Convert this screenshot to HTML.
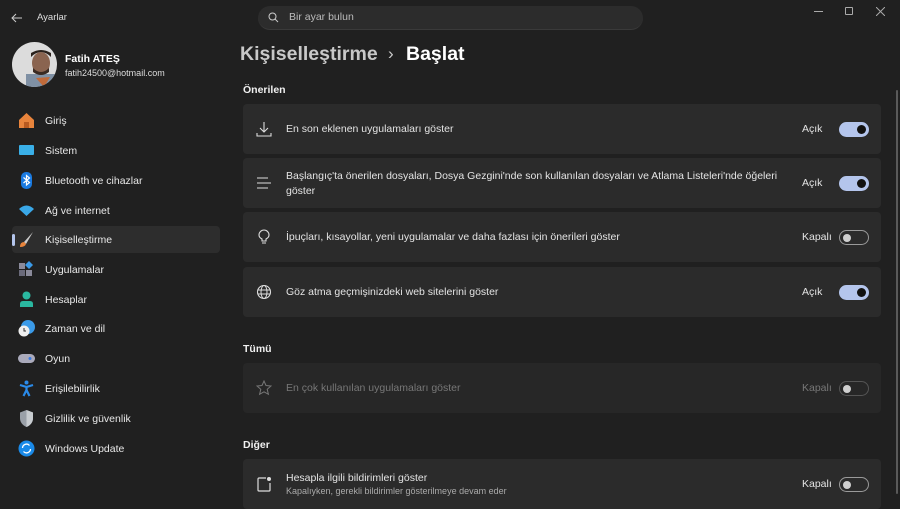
<!DOCTYPE html>
<html><head><meta charset="utf-8"><style>
*{margin:0;padding:0;box-sizing:border-box}
body{width:900px;height:494px;overflow:hidden;background:#202020;font-family:"Segoe UI","Liberation Sans",sans-serif;color:#fff;position:relative}
.abs{position:absolute}
.nav{position:absolute;left:12px;width:208px;height:27px;font-size:10.5px;color:#e8e8e8;display:flex;align-items:center}
.nav .ic{position:absolute;left:6px;top:5px;width:17px;height:17px}
.nav span{position:absolute;left:33px}
.sel{background:#2d2d2d;border-radius:4px}
.bar{position:absolute;left:0;top:8px;width:3px;height:12px;background:#b4c5ec;border-radius:2px}
.card{position:absolute;left:243px;width:638px;background:#2b2b2b;border-radius:4px}
.card .t{position:absolute;left:43px;font-size:10.5px;color:#e4e4e4}
.card .ico{position:absolute;left:13px;width:16px;height:16px}
.lab{position:absolute;left:559px;font-size:10.5px;color:#e4e4e4}
.tg{position:absolute;right:12px;width:30px;height:15px;border-radius:8px}
.on{background:#b4c5ec}
.on::after{content:"";position:absolute;right:3px;top:3px;width:9px;height:9px;border-radius:50%;background:#111}
.off{border:1px solid #9a9a9a}
.off::after{content:"";position:absolute;left:3px;top:2.5px;width:8px;height:8px;border-radius:50%;background:#d0d0d0}
h3{position:absolute;left:243px;font-size:10.5px;font-weight:bold;color:#f0f0f0}
</style></head><body>
<svg class="abs" style="left:11px;top:12px" width="12" height="12" viewBox="0 0 12 12"><path d="M11 6H1M5 2L1 6l4 4" stroke="#ccc" stroke-width="1" fill="none"/></svg>
<div class="abs" style="left:37px;top:12px;font-size:9.5px;color:#ddd">Ayarlar</div>
<div class="abs" style="left:258px;top:6px;width:385px;height:24px;background:#2c2c2c;border-radius:12px;border-bottom:1px solid #3a3a3a"></div>
<svg class="abs" style="left:268px;top:12px" width="11" height="11" viewBox="0 0 11 11"><circle cx="4.5" cy="4.5" r="3.5" stroke="#ccc" fill="none"/><path d="M7 7l3 3" stroke="#ccc"/></svg>
<div class="abs" style="left:289px;top:11px;font-size:10.5px;color:#bbb">Bir ayar bulun</div>
<div class="abs" style="left:814px;top:11px;width:9px;height:1px;background:#aaa"></div>
<div class="abs" style="left:845px;top:7px;width:8px;height:8px;border:1px solid #aaa;border-radius:1px"></div>
<svg class="abs" style="left:876px;top:7px" width="9" height="9"><path d="M0 0L9 9M9 0L0 9" stroke="#aaa"/></svg>
<div class="abs" style="left:896px;top:90px;width:2px;height:404px;background:#5a5a5a;border-radius:1px"></div>

<svg class="abs" style="left:12px;top:42px" width="45" height="45" viewBox="0 0 45 45"><defs><clipPath id="c"><circle cx="22.5" cy="22.5" r="22.5"/></clipPath></defs><g clip-path="url(#c)"><rect width="45" height="45" fill="#dcdcdc"/><rect x="14" y="32" width="31" height="13" fill="#7f90a4"/><ellipse cx="29" cy="21" rx="9" ry="11" fill="#8a6450"/><path d="M19 15q10-10 20 0v-4q-10-6-20 0z" fill="#2a211c"/><path d="M21 26q8 8 16 0v4q-8 6-16 0z" fill="#3a2a22"/><path d="M24 36l8 9 6-10z" fill="#c06a3a"/></g></svg>
<div class="abs" style="left:65px;top:53px;font-size:10.5px;font-weight:bold">Fatih ATEŞ</div>
<div class="abs" style="left:65px;top:68px;font-size:9px;color:#ddd">fatih24500@hotmail.com</div>

<div class="nav" style="top:107px"><svg class="ic" viewBox="0 0 17 17"><path d="M1 8L8.5 1 16 8v8H1z" fill="#e8843c"/><rect x="6" y="10" width="5" height="6" fill="#b85a20"/></svg><span>Giriş</span></div>
<div class="nav" style="top:137px"><svg class="ic" viewBox="0 0 17 17"><rect x="1" y="3" width="15" height="10" rx="1" fill="#3ab0e8"/></svg><span>Sistem</span></div>
<div class="nav" style="top:167px"><svg class="ic" viewBox="0 0 17 17"><rect x="3" y="0" width="11" height="17" rx="5" fill="#1a7ae0"/><path d="M5.5 5.5l6 5-3 2.5V3.5l3 2.5-6 5" stroke="#fff" fill="none" stroke-width="1.2"/></svg><span>Bluetooth ve cihazlar</span></div>
<div class="nav" style="top:197px"><svg class="ic" viewBox="0 0 17 17"><path d="M1 7Q8.5 0 16 7L8.5 14z" fill="#3aa8e8"/></svg><span>Ağ ve internet</span></div>
<div class="nav sel" style="top:226px"><div class="bar"></div><svg class="ic" viewBox="0 0 17 17"><path d="M15 1L6 11l2 2z" fill="#ccc"/><path d="M6 11Q2 11 2 16Q7 16 8 13z" fill="#e8843c"/></svg><span>Kişiselleştirme</span></div>
<div class="nav" style="top:256px"><svg class="ic" viewBox="0 0 17 17"><rect x="1" y="2" width="6" height="6" fill="#8a8a9a"/><rect x="1" y="9" width="6" height="6" fill="#6a6a7a"/><rect x="8" y="9" width="6" height="6" fill="#8a8a9a"/><path d="M11 0l4 4-4 4-4-4z" fill="#3a9ae8"/></svg><span>Uygulamalar</span></div>
<div class="nav" style="top:286px"><svg class="ic" viewBox="0 0 17 17"><circle cx="8.5" cy="4.5" r="4" fill="#2ab8a0"/><path d="M2 16v-3q0-3 3-3h7q3 0 3 3v3z" fill="#2ab8a0"/></svg><span>Hesaplar</span></div>
<div class="nav" style="top:315px"><svg class="ic" viewBox="0 0 17 17"><circle cx="10" cy="7" r="7" fill="#3a9ae8"/><circle cx="6" cy="11" r="5.5" fill="#eee"/><path d="M6 8v3h2" stroke="#333" fill="none"/></svg><span>Zaman ve dil</span></div>
<div class="nav" style="top:345px"><svg class="ic" viewBox="0 0 17 17"><rect x="0" y="4" width="17" height="9" rx="4.5" fill="#aab"/><circle cx="12" cy="8.5" r="1.5" fill="#3a7ae0"/></svg><span>Oyun</span></div>
<div class="nav" style="top:375px"><svg class="ic" viewBox="0 0 17 17"><circle cx="8.5" cy="2.5" r="2" fill="#2a8ae8"/><path d="M2 5l6.5 2 6.5-2M8.5 7v3l-3 6M8.5 10l3 6" stroke="#2a8ae8" stroke-width="2.2" fill="none"/></svg><span>Erişilebilirlik</span></div>
<div class="nav" style="top:405px"><svg class="ic" viewBox="0 0 17 17"><path d="M8.5 0L15 2.5V8q0 6-6.5 9Q2 14 2 8V2.5z" fill="#9aa0a8"/><path d="M8.5 0L15 2.5V8q0 6-6.5 9z" fill="#c8ccd0"/></svg><span>Gizlilik ve güvenlik</span></div>
<div class="nav" style="top:435px"><svg class="ic" viewBox="0 0 17 17"><circle cx="8.5" cy="8.5" r="8" fill="#1a8ae8"/><path d="M4.5 8a4 4 0 0 1 7-2.5M12.5 9a4 4 0 0 1-7 2.5" stroke="#fff" stroke-width="1.3" fill="none"/></svg><span>Windows Update</span></div>

<div class="abs" style="left:240px;top:43px;font-size:19.5px;font-weight:bold;color:#c8c8c8">Kişiselleştirme</div>
<div class="abs" style="left:388px;top:44px;font-size:17px;color:#ccc">›</div>
<div class="abs" style="left:406px;top:43px;font-size:19.5px;font-weight:bold">Başlat</div>
<h3 style="top:84px">Önerilen</h3>

<div class="card" style="top:104px;height:50px"><svg class="ico" style="top:17px" viewBox="0 0 16 16"><path d="M8 1v10M4 7l4 4 4-4M1 12v3h14v-3" stroke="#ddd" fill="none" stroke-width="1.1"/></svg><div class="t" style="top:19px">En son eklenen uygulamaları göster</div><div class="lab" style="top:19px">Açık</div><div class="tg on" style="top:18px"></div></div>
<div class="card" style="top:158px;height:50px"><svg class="ico" style="top:17px" viewBox="0 0 16 16"><path d="M1 3h11M1 8h14M1 13h11" stroke="#ddd" stroke-width="1.1"/></svg><div class="t" style="top:11px;line-height:15px;width:495px">Başlangıç'ta önerilen dosyaları, Dosya Gezgini'nde son kullanılan dosyaları ve Atlama Listeleri'nde öğeleri göster</div><div class="lab" style="top:19px">Açık</div><div class="tg on" style="top:18px"></div></div>
<div class="card" style="top:212px;height:50px"><svg class="ico" style="top:17px" viewBox="0 0 16 16"><path d="M6 14h4M6 12V10Q3 8.5 3 6a5 5 0 0 1 10 0q0 2.5-3 4v2z" stroke="#ddd" fill="none" stroke-width="1.1"/></svg><div class="t" style="top:19px">İpuçları, kısayollar, yeni uygulamalar ve daha fazlası için önerileri göster</div><div class="lab" style="top:19px">Kapalı</div><div class="tg off" style="top:18px"></div></div>
<div class="card" style="top:267px;height:50px"><svg class="ico" style="top:17px" viewBox="0 0 16 16"><circle cx="8" cy="8" r="6.5" stroke="#ddd" fill="none" stroke-width="1.1"/><ellipse cx="8" cy="8" rx="3" ry="6.5" stroke="#ddd" fill="none"/><path d="M1.5 6h13M1.5 10h13" stroke="#ddd"/></svg><div class="t" style="top:19px">Göz atma geçmişinizdeki web sitelerini göster</div><div class="lab" style="top:19px">Açık</div><div class="tg on" style="top:18px"></div></div>

<h3 style="top:343px">Tümü</h3>
<div class="card" style="top:363px;height:50px;background:#272727"><svg class="ico" style="top:17px" viewBox="0 0 16 16"><path d="M8 1l2 4.5 5 .5-3.8 3.3 1.2 5L8 11.8 3.6 14.3l1.2-5L1 6l5-.5z" stroke="#777" fill="none"/></svg><div class="t" style="top:19px;color:#777">En çok kullanılan uygulamaları göster</div><div class="lab" style="top:19px;color:#777">Kapalı</div><div class="tg off" style="top:18px;border-color:#555"></div></div>

<h3 style="top:439px">Diğer</h3>
<div class="card" style="top:459px;height:50px"><svg class="ico" style="top:17px" viewBox="0 0 16 16"><path d="M10 2H3a1 1 0 0 0-1 1v11a1 1 0 0 0 1 1h10a1 1 0 0 0 1-1V7" stroke="#ddd" fill="none" stroke-width="1.2"/><circle cx="13" cy="3" r="2" fill="#ddd"/></svg><div class="t" style="top:13px">Hesapla ilgili bildirimleri göster</div><div class="t" style="top:27px;font-size:9px;color:#aaa">Kapalıyken, gerekli bildirimler gösterilmeye devam eder</div><div class="lab" style="top:19px">Kapalı</div><div class="tg off" style="top:18px"></div></div>
</body></html>
